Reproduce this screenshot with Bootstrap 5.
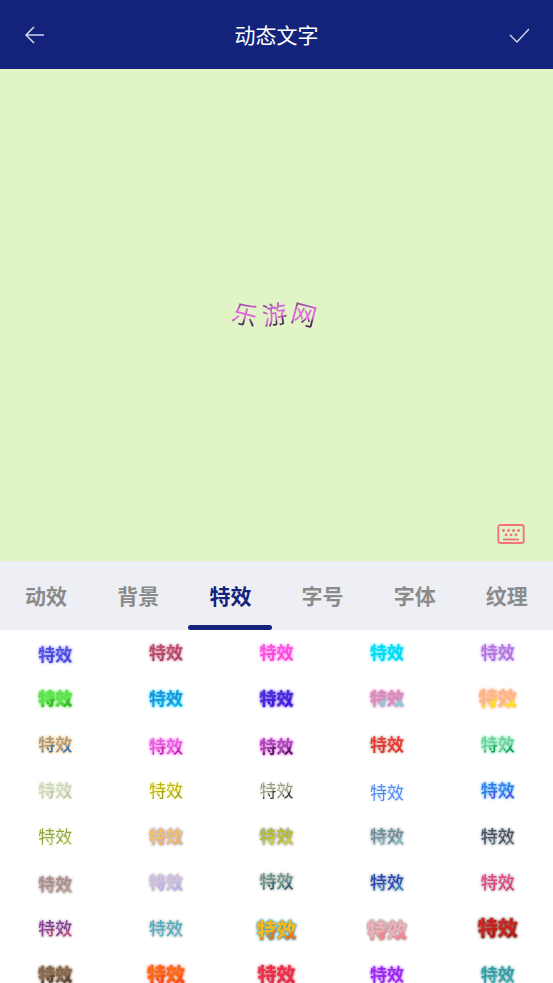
<!DOCTYPE html>
<html lang="zh-CN">
<head>
<meta charset="utf-8">
<meta name="viewport" content="width=device-width, initial-scale=1">
<title>动态文字</title>
<link href="https://cdn.jsdelivr.net/npm/bootstrap@5.3.0/dist/css/bootstrap.min.css" rel="stylesheet">
<style>
  body { font-family: "Noto Sans CJK SC", sans-serif; }
  button { background: none; border: 0; padding: 0; }
  .topbar { background: #13227a; height: 69px; color: #d5d8ee; }
  .topbar h1 { font-size: 21px; line-height: 32px; padding-bottom: 2px; color: #fff; }
  .icon { display: block; fill: none; stroke: currentColor; }
  .stage { background: #e1f4c5; flex: 492 1 0; min-height: 0; }
  .arc { font-size: 25px; line-height: 36px; gap: 4px; padding: 0 3px 4px 0; }
  .arc span { background: linear-gradient(160deg, #7d4289 22%, #d862d8 42%, #e069df 62%, #4b2856 72%); -webkit-background-clip: text; background-clip: text; color: transparent; }
  .arc .tilt-r { transform: rotate(15deg); }
  .arc .tilt-l { transform: rotate(-9deg); }
  .keyboard { right: 28px; bottom: 17px; color: #f3717c; }
  .tabs { background: #eeeff5; height: 69px; }
  .tabs button { font-size: 21px; line-height: 32px; font-weight: 700; color: #8b8b8b; border-bottom: 5px solid transparent; padding-top: 3px; }
  .tabs button.active { color: #13227a; position: relative; }
  .tabs button.active::after { content: ""; position: absolute; left: 4px; right: 4px; bottom: -5px; height: 5px; border-radius: 3px; background: #13227a; }
  .effects { flex: 353 1 0; min-height: 0; overflow: hidden; }
  .effects button { height: 46px; font-size: 17px; line-height: 24px; font-weight: 700; padding-bottom: 2px; }
  .effects span { background: linear-gradient(150deg, var(--a) 60%, var(--b) 68%) 0 0 / 50% 100%; -webkit-background-clip: text; background-clip: text; color: transparent; filter: drop-shadow(0 0 1px var(--h)) drop-shadow(0 0 1px var(--h)); }
  .effects .thin { font-weight: 400; }
  .effects .thin span { filter: drop-shadow(0 0 1px var(--h)); }
  .effects .mid { font-weight: 500; }
  .effects .heavy { font-weight: 900; }
  .effects .large { font-size: 20px; }
  .effects .medium { font-size: 19px; }
  .effects .low { padding-top: 4px; }
  .effects .high { padding-bottom: 4px; }
  .indigo { --a:#5150e2; --b:#4544d6; --h:#a5a5fa; }
  .wine { --a:#b94b69; --b:#ad405f; --h:#d9a0b4; }
  .pink { --a:#ff4ce0; --b:#fa45da; --h:#ff9cf0; }
  .cyan { --a:#00d8f5; --b:#00d5f2; --h:#60efff; }
  .lilac { --a:#b578e2; --b:#b172e0; --h:#d5b8f4; }
  .green { --a:#5de24e; --b:#39b72c; --h:#6be85d; }
  .azure { --a:#218fd5; --b:#0ba5e0; --h:#4be0ff; }
  .violet { --a:#4a2bd7; --b:#4316e0; --h:#8f78f2; }
  .candy { --a:#d38fbb; --b:#79cfdc; --h:#ef9acb; }
  .peach { --a:#fcb786; --b:#ffe11e; --h:#ffbda0; }
  .sunrise { --a:#9a9c95; --b:#1f74c4; --h:#ffc477; }
  .magenta { --a:#e05bda; --b:#b823a8; --h:#ff8bf5; }
  .orchid { --a:#a04cae; --b:#4d2060; --h:#ec78ea; }
  .red { --a:#ed3934; --b:#df352f; --h:#d6b9ae; }
  .mint { --a:#70cf9d; --b:#129a5c; --h:#86eab5; }
  .ghost { --a:#cdd6bd; --b:#bac5a3; --h:#e8ecd4; }
  .lemon { --a:#bdb417; --b:#8f9c1e; --h:#f4ed57; }
  .sage { --a:#999d84; --b:#26392e; --h:#dedfcf; }
  .blue { --a:#4e8af0; --b:#5788e9; --h:#b9d4ff; }
  .ocean { --a:#2b7ee4; --b:#4d4cdc; --h:#87bcff; }
  .olive { --a:#8fa735; --b:#a3bf51; --h:#dce7bd; }
  .apricot { --a:#f7c06a; --b:#f2b263; --h:#b9aebc; }
  .lime { --a:#b5bf1f; --b:#d2cf27; --h:#a6aa98; }
  .teal { --a:#6b8d9b; --b:#72bcbc; --h:#b3b6be; }
  .slate { --a:#4d5260; --b:#5b6d79; --h:#b4bac2; }
  .mauve { --a:#ab8b88; --b:#b8968e; --h:#b0a5a6; }
  .lavender { --a:#d2c0ea; --b:#b3acf0; --h:#b9b0bd; }
  .moss { --a:#6b9490; --b:#2c5f78; --h:#aeb8ac; }
  .navy { --a:#2946b4; --b:#3080b8; --h:#a7b3cb; }
  .rose { --a:#e24783; --b:#d6396f; --h:#c9b3bb; }
  .plum { --a:#864196; --b:#c0406c; --h:#cbb7cd; }
  .aqua { --a:#4faebd; --b:#5fb7ca; --h:#bdc5cc; }
  .gold { --a:#f5b91c; --b:#f07418; --h:#4a9dab; }
  .blush { --a:#eeb0bd; --b:#f7848f; --h:#b29590; }
  .ruby { --a:#c82320; --b:#b51917; --h:#8c6155; }
  .brown { --a:#8b6849; --b:#5f452f; --h:#8a7868; }
  .orange { --a:#ff6611; --b:#fc4d12; --h:#e78368; }
  .scarlet { --a:#ed2f49; --b:#e42d48; --h:#e0848f; }
  .purple { --a:#9c27f3; --b:#a129e1; --h:#c78af7; }
  .sea { --a:#379da5; --b:#42aaad; --h:#8fc3c8; }
</style>
<script src="https://cdn.jsdelivr.net/npm/bootstrap@5.3.0/dist/js/bootstrap.bundle.min.js"></script>
</head>
<body class="bg-white">
<div class="vh-100 d-flex flex-column overflow-hidden">
  <header class="topbar d-flex align-items-center justify-content-between px-4 flex-shrink-0">
    <button type="button" aria-label="返回" class="text-reset"><svg class="icon" width="20" height="20" viewBox="0 0 20 20" stroke-width="1.5"><path d="M20 10H2M10 2L2 10L10 18"/></svg></button>
    <h1 class="m-0 fw-normal">动态文字</h1>
    <button type="button" aria-label="完成" class="text-reset"><svg class="icon" width="20" height="20" viewBox="0 0 20 20" stroke-width="1.4"><path d="M1 10L8 17L20 4"/></svg></button>
  </header>
  <main class="stage position-relative d-flex align-items-center justify-content-center">
    <div class="arc d-flex"><span class="tilt-r">乐</span><span class="tilt-l">游</span><span class="tilt-r">网</span></div>
    <button type="button" aria-label="键盘" class="keyboard position-absolute"><svg class="icon" width="28" height="20" viewBox="0 0 28 20" stroke-width="1.8"><rect x="1.3" y="1" width="25.4" height="18" rx="2"/><path d="M6 15.5H22"/><path stroke-width="2.8" stroke-linecap="round" d="M6.5 6.5h.1M11.5 6.5h.1M16.5 6.5h.1M21.5 6.5h.1M9 10.8h.1M14 10.8h.1M19 10.8h.1"/></svg></button>
  </main>
  <nav class="tabs row row-cols-6 g-0 flex-shrink-0">
    <button type="button">动效</button>
    <button type="button">背景</button>
    <button type="button" class="active" aria-current="true">特效</button>
    <button type="button">字号</button>
    <button type="button">字体</button>
    <button type="button">纹理</button>
  </nav>
  <section class="effects" aria-label="特效">
    <div class="row row-cols-5 g-0">
      <button type="button" class="indigo low"><span>特效</span></button>
      <button type="button" class="wine"><span>特效</span></button>
      <button type="button" class="pink"><span>特效</span></button>
      <button type="button" class="cyan"><span>特效</span></button>
      <button type="button" class="lilac"><span>特效</span></button>

      <button type="button" class="green heavy"><span>特效</span></button>
      <button type="button" class="azure"><span>特效</span></button>
      <button type="button" class="violet heavy"><span>特效</span></button>
      <button type="button" class="candy heavy"><span>特效</span></button>
      <button type="button" class="peach heavy medium"><span>特效</span></button>

      <button type="button" class="sunrise mid"><span>特效</span></button>
      <button type="button" class="magenta mid low"><span>特效</span></button>
      <button type="button" class="orchid low"><span>特效</span></button>
      <button type="button" class="red"><span>特效</span></button>
      <button type="button" class="mint mid"><span>特效</span></button>

      <button type="button" class="ghost mid"><span>特效</span></button>
      <button type="button" class="lemon thin"><span>特效</span></button>
      <button type="button" class="sage thin"><span>特效</span></button>
      <button type="button" class="blue thin low"><span>特效</span></button>
      <button type="button" class="ocean mid"><span>特效</span></button>

      <button type="button" class="olive thin"><span>特效</span></button>
      <button type="button" class="apricot"><span>特效</span></button>
      <button type="button" class="lime mid"><span>特效</span></button>
      <button type="button" class="teal mid"><span>特效</span></button>
      <button type="button" class="slate mid"><span>特效</span></button>

      <button type="button" class="mauve mid low"><span>特效</span></button>
      <button type="button" class="lavender mid"><span>特效</span></button>
      <button type="button" class="moss mid high"><span>特效</span></button>
      <button type="button" class="navy mid"><span>特效</span></button>
      <button type="button" class="rose mid"><span>特效</span></button>

      <button type="button" class="plum mid"><span>特效</span></button>
      <button type="button" class="aqua mid"><span>特效</span></button>
      <button type="button" class="gold heavy large low"><span>特效</span></button>
      <button type="button" class="blush heavy large low"><span>特效</span></button>
      <button type="button" class="ruby heavy large"><span>特效</span></button>

      <button type="button" class="brown heavy"><span>特效</span></button>
      <button type="button" class="orange heavy medium"><span>特效</span></button>
      <button type="button" class="scarlet heavy medium"><span>特效</span></button>
      <button type="button" class="purple"><span>特效</span></button>
      <button type="button" class="sea"><span>特效</span></button>
    </div>
  </section>
</div>
</body>
</html>
